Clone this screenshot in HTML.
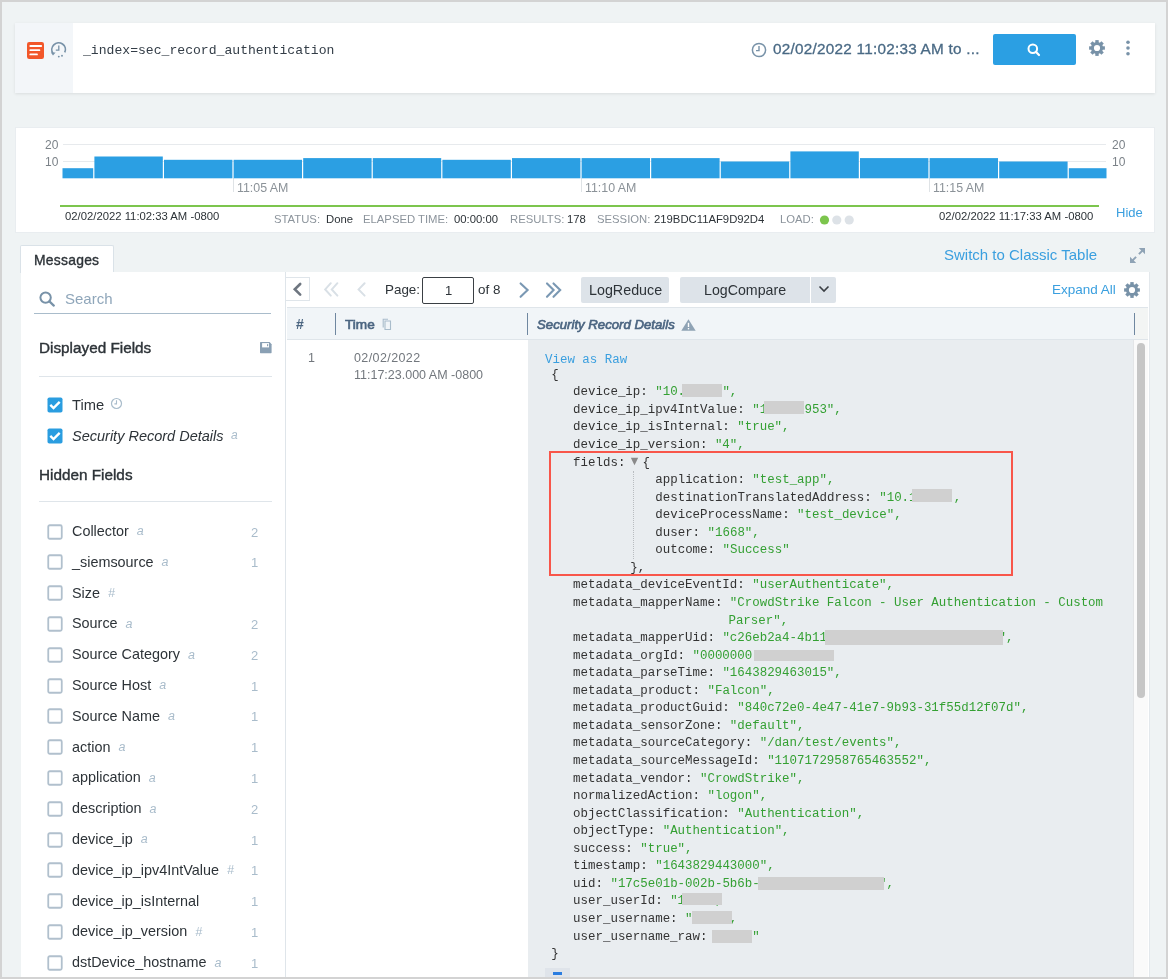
<!DOCTYPE html>
<html><head><meta charset="utf-8">
<style>
*{box-sizing:border-box;margin:0;padding:0}
html,body{width:1168px;height:979px;overflow:hidden;background:#d3d3d3;font-family:"Liberation Sans",sans-serif;color:#2d3338}
.a{position:absolute;white-space:pre}
#wrap{position:absolute;left:0;top:0;width:1168px;height:979px;will-change:transform}
#page{position:absolute;left:2px;top:2px;width:1164px;height:975px;background:#eff3f4;overflow:hidden}
.c{font-size:12.445px;line-height:17.59px;color:#333}
.mono{font-family:"Liberation Mono",monospace}
</style></head><body><div id="wrap">
<div class="a" style="left:0;top:0;width:1168px;height:979px;background:#d3d3d3"></div>
<div class="a" style="left:2px;top:2px;width:1164px;height:975px;background:#eff3f4"></div>

<!-- search bar -->
<div class="a" style="left:15px;top:23px;width:1140px;height:70px;background:#fff;box-shadow:0 1px 3px rgba(0,0,0,0.09)"></div>
<div class="a" style="left:15px;top:23px;width:58px;height:70px;background:#f3f6f9"></div>
<div class="a mono" style="left:83px;top:42px;font-size:13.1px;line-height:18px;color:#333d47">_index=sec_record_authentication</div>
<div class="a" style="left:773px;top:40px;font-size:15.3px;letter-spacing:0.25px;line-height:18px;color:#4a6a85;-webkit-text-stroke:0.3px #4a6a85">02/02/2022 11:02:33 AM to ...</div>
<div class="a" style="left:993px;top:34px;width:83px;height:31px;background:#2b9fe3;border-radius:2px"></div>

<!-- search icons -->
<svg class="a" style="left:27px;top:42px" width="17" height="17" viewBox="0 0 17 17"><rect x="0" y="0" width="17" height="17" rx="2.2" fill="#f2572a"/><g stroke="#fff" stroke-width="1.8" stroke-linecap="round"><line x1="3.3" y1="4" x2="14.2" y2="4"/><line x1="3.3" y1="8.2" x2="12.4" y2="8.2"/><line x1="3.3" y1="12.4" x2="10" y2="12.4"/></g></svg>
<svg class="a" style="left:50px;top:41px" width="18" height="18" viewBox="0 0 18 18"><path d="M3.03 12.50 A6.8 6.8 0 1 1 14.76 11.47" fill="none" stroke="#7892a8" stroke-width="1.7"/><path d="M0.9 11.6 L5.6 11.6 L3.0 14.6 Z" fill="#7892a8"/><path d="M8.8 4.4 V9.2 H5.8" fill="none" stroke="#7892a8" stroke-width="1.3"/><circle cx="8.8" cy="15.6" r="0.95" fill="#7892a8"/><circle cx="12.0" cy="14.8" r="0.95" fill="#7892a8"/></svg>
<svg class="a" style="left:751px;top:42px" width="16" height="16" viewBox="0 0 16 16"><circle cx="8" cy="8" r="6.6" fill="none" stroke="#7892a8" stroke-width="1.5"/><path d="M8 4 V8.6 H5" fill="none" stroke="#7892a8" stroke-width="1.4"/></svg>
<svg class="a" style="left:1026px;top:42px" width="16" height="16" viewBox="0 0 16 16"><circle cx="6.8" cy="6.8" r="4.3" fill="none" stroke="#fff" stroke-width="2"/><line x1="9.8" y1="9.8" x2="13" y2="13" stroke="#fff" stroke-width="2.2" stroke-linecap="round"/></svg>
<svg class="a" style="left:1089px;top:40px" width="16" height="16" viewBox="0 0 16 16"><g fill="#7892a8"><rect x="6.30" y="0.10" width="3.4" height="3.2" transform="rotate(0 8.00 8.00)"/><rect x="6.30" y="0.10" width="3.4" height="3.2" transform="rotate(45 8.00 8.00)"/><rect x="6.30" y="0.10" width="3.4" height="3.2" transform="rotate(90 8.00 8.00)"/><rect x="6.30" y="0.10" width="3.4" height="3.2" transform="rotate(135 8.00 8.00)"/><rect x="6.30" y="0.10" width="3.4" height="3.2" transform="rotate(180 8.00 8.00)"/><rect x="6.30" y="0.10" width="3.4" height="3.2" transform="rotate(225 8.00 8.00)"/><rect x="6.30" y="0.10" width="3.4" height="3.2" transform="rotate(270 8.00 8.00)"/><rect x="6.30" y="0.10" width="3.4" height="3.2" transform="rotate(315 8.00 8.00)"/><path fill-rule="evenodd" d="M8.00 8.00 m-6.1 0 a6.1 6.1 0 1 0 12.2 0 a6.1 6.1 0 1 0 -12.2 0 z M8.00 8.00 m-3.1 0 a3.1 3.1 0 1 1 6.2 0 a3.1 3.1 0 1 1 -6.2 0 z"/></g></svg>
<svg class="a" style="left:1125px;top:40px" width="6" height="17" viewBox="0 0 6 17"><circle cx="3" cy="2.2" r="1.8" fill="#7892a8"/><circle cx="3" cy="8" r="1.8" fill="#7892a8"/><circle cx="3" cy="13.8" r="1.8" fill="#7892a8"/></svg>

<!-- chart panel -->
<div class="a" style="left:15px;top:127px;width:1140px;height:106px;background:#fff;border:1px solid #e9edf0"></div>
<div class="a" style="left:60px;top:205px;width:1039px;height:2px;background:#7cc54d"></div>
<!-- chart -->
<svg class="a" style="left:0;top:0" width="1168" height="240">
<g stroke="#e7eaed" stroke-width="1"><line x1="63" y1="144.5" x2="1106" y2="144.5"/><line x1="63" y1="161.5" x2="1106" y2="161.5"/></g>
<g stroke="#dfe3e6" stroke-width="1"><line x1="233.5" y1="178" x2="233.5" y2="192"/><line x1="581.5" y1="178" x2="581.5" y2="192"/><line x1="929.5" y1="178" x2="929.5" y2="192"/></g>
<g fill="#2b9fe3">
<rect x="62.5" y="168.2" width="30.7" height="10.1"/>
<rect x="94.4" y="156.5" width="68.4" height="21.8"/>
<rect x="164.0" y="159.8" width="68.4" height="18.5"/>
<rect x="233.6" y="159.8" width="68.4" height="18.5"/>
<rect x="303.2" y="158.1" width="68.4" height="20.2"/>
<rect x="372.8" y="158.1" width="68.4" height="20.2"/>
<rect x="442.4" y="159.8" width="68.4" height="18.5"/>
<rect x="512.0" y="158.1" width="68.4" height="20.2"/>
<rect x="581.6" y="158.1" width="68.4" height="20.2"/>
<rect x="651.2" y="158.1" width="68.4" height="20.2"/>
<rect x="720.8" y="161.5" width="68.4" height="16.8"/>
<rect x="790.4" y="151.4" width="68.4" height="26.9"/>
<rect x="860.0" y="158.1" width="68.4" height="20.2"/>
<rect x="929.6" y="158.1" width="68.4" height="20.2"/>
<rect x="999.2" y="161.5" width="68.4" height="16.8"/>
<rect x="1068.8" y="168.2" width="37.7" height="10.1"/>
</g>
</svg>
<div class="a" style="left:45px;top:138px;font-size:12px;line-height:14px;color:#7b8288">20</div>
<div class="a" style="left:45px;top:155px;font-size:12px;line-height:14px;color:#7b8288">10</div>
<div class="a" style="left:1112px;top:138px;font-size:12px;line-height:14px;color:#7b8288">20</div>
<div class="a" style="left:1112px;top:155px;font-size:12px;line-height:14px;color:#7b8288">10</div>
<div class="a" style="left:237px;top:181px;font-size:12.4px;line-height:14px;color:#8b9298">11:05 AM</div>
<div class="a" style="left:585px;top:181px;font-size:12.4px;line-height:14px;color:#8b9298">11:10 AM</div>
<div class="a" style="left:933px;top:181px;font-size:12.4px;line-height:14px;color:#8b9298">11:15 AM</div>
<div class="a" style="left:65px;top:209.6px;font-size:11.3px;line-height:13px;color:#2d3338">02/02/2022 11:02:33 AM -0800</div>
<div class="a" style="left:939px;top:209.6px;font-size:11.3px;line-height:13px;color:#2d3338">02/02/2022 11:17:33 AM -0800</div>
<div class="a" style="left:1116px;top:205px;font-size:13px;line-height:15px;color:#3a9fdf">Hide</div>
<div class="a" style="left:274px;top:213px;font-size:11.3px;line-height:13px;color:#8c949c">STATUS:</div>
<div class="a" style="left:326px;top:213px;font-size:11.3px;line-height:13px;color:#2d3338">Done</div>
<div class="a" style="left:363px;top:213px;font-size:11.3px;line-height:13px;color:#8c949c">ELAPSED TIME:</div>
<div class="a" style="left:454px;top:213px;font-size:11.3px;line-height:13px;color:#2d3338">00:00:00</div>
<div class="a" style="left:510px;top:213px;font-size:11.3px;line-height:13px;color:#8c949c">RESULTS:</div>
<div class="a" style="left:567px;top:213px;font-size:11.3px;line-height:13px;color:#2d3338">178</div>
<div class="a" style="left:597px;top:213px;font-size:11.3px;line-height:13px;color:#8c949c">SESSION:</div>
<div class="a" style="left:654px;top:213px;font-size:11.3px;line-height:13px;color:#2d3338">219BDC11AF9D92D4</div>
<div class="a" style="left:780px;top:213px;font-size:11.3px;line-height:13px;color:#8c949c">LOAD:</div>
<svg class="a" style="left:818px;top:214px" width="40" height="12"><circle cx="6.5" cy="6" r="4.6" fill="#7cc54d"/><circle cx="18.8" cy="6" r="4.6" fill="#dde2e7"/><circle cx="31.2" cy="6" r="4.6" fill="#dde2e7"/></svg>


<!-- tab -->
<div class="a" style="left:20px;top:245px;width:94px;height:28px;background:#fff;border:1px solid #dae2e8;border-bottom:none;border-radius:2px 2px 0 0"></div>
<div class="a" style="left:34px;top:250.5px;font-size:13.9px;letter-spacing:0.25px;line-height:18px;color:#2d3338;-webkit-text-stroke:0.35px #2d3338">Messages</div>

<!-- left panel -->
<div class="a" style="left:21px;top:272px;width:265px;height:705px;background:#fff;border-right:1px solid #dfe5ea"></div>

<!-- left panel content -->
<svg class="a" style="left:39px;top:291px" width="17" height="16" viewBox="0 0 17 16"><circle cx="6.6" cy="6.6" r="5.2" fill="none" stroke="#7892a8" stroke-width="2"/><line x1="10.4" y1="10.4" x2="14.8" y2="14.6" stroke="#7892a8" stroke-width="2.2" stroke-linecap="round"/></svg>
<div class="a" style="left:65px;top:290px;font-size:15px;line-height:17px;color:#8fa6ba">Search</div>
<div class="a" style="left:34px;top:313px;width:237px;height:1px;background:#a9bccb"></div>
<div class="a" style="left:39px;top:338.5px;font-size:15.3px;line-height:18px;color:#2d3338;-webkit-text-stroke:0.4px #2d3338">Displayed Fields</div>
<svg class="a" style="left:260px;top:342px" width="12" height="12" viewBox="0 0 12 12"><path d="M0 0.6 Q0 0 0.6 0 H9.6 L11.6 2.2 V10.6 Q11.6 11.2 11 11.2 H0.6 Q0 11.2 0 10.6 Z" fill="#8aa0b4"/><rect x="2.1" y="1.1" width="6.9" height="4.3" fill="#fff"/><rect x="7.0" y="1.9" width="1.2" height="2.4" rx="0.5" fill="#8aa0b4"/></svg>
<div class="a" style="left:39px;top:376px;width:233px;height:1px;background:#dfe5ea"></div>
<svg class="a" style="left:47px;top:397.0px" width="16" height="16" viewBox="0 0 16 16"><rect x="0.5" y="0.5" width="15" height="15" rx="1.8" fill="#2a9de0"/><path d="M3.3 7.9 L6.5 11 L12.7 4.8" fill="none" stroke="#fff" stroke-width="2.4"/></svg>
<div class="a" style="left:72px;top:397px;font-size:14.7px;line-height:17px;color:#2d3338">Time</div>
<svg class="a" style="left:110px;top:397px" width="13" height="13" viewBox="0 0 13 13"><circle cx="6.5" cy="6.5" r="5" fill="none" stroke="#a9bccb" stroke-width="1.2"/><path d="M6.5 3.3 V6.9 H4.4" fill="none" stroke="#a9bccb" stroke-width="1.1"/></svg>
<svg class="a" style="left:47px;top:427.6px" width="16" height="16" viewBox="0 0 16 16"><rect x="0.5" y="0.5" width="15" height="15" rx="1.8" fill="#2a9de0"/><path d="M3.3 7.9 L6.5 11 L12.7 4.8" fill="none" stroke="#fff" stroke-width="2.4"/></svg>
<div class="a" style="left:72px;top:428px;font-size:14.5px;line-height:17px;color:#2d3338;font-style:italic">Security Record Details</div>
<div class="a" style="left:231px;top:428px;font-size:12px;line-height:15px;color:#a9bccb;font-style:italic">a</div>
<div class="a" style="left:39px;top:465.7px;font-size:15.3px;line-height:18px;color:#2d3338;-webkit-text-stroke:0.4px #2d3338">Hidden Fields</div>
<div class="a" style="left:39px;top:501px;width:233px;height:1px;background:#dfe5ea"></div>
<svg class="a" style="left:47px;top:523.5px" width="16" height="16" viewBox="0 0 16 16"><rect x="1.25" y="1.25" width="13.5" height="13.5" rx="1.5" fill="#fff" stroke="#b1c0cd" stroke-width="1.8"/></svg>
<div class="a" style="left:72px;top:523.0px;font-size:14.4px;line-height:17px;color:#2d3338">Collector<span style="font-size:12.5px;color:#a9bccb;font-style:italic;margin-left:8px;position:relative;top:-0.7px">a</span></div>
<div class="a" style="left:251px;top:524.5px;font-size:13px;line-height:15px;color:#a9bccb">2</div>
<svg class="a" style="left:47px;top:554.3px" width="16" height="16" viewBox="0 0 16 16"><rect x="1.25" y="1.25" width="13.5" height="13.5" rx="1.5" fill="#fff" stroke="#b1c0cd" stroke-width="1.8"/></svg>
<div class="a" style="left:72px;top:553.8px;font-size:14.4px;line-height:17px;color:#2d3338">_siemsource<span style="font-size:12.5px;color:#a9bccb;font-style:italic;margin-left:8px;position:relative;top:-0.7px">a</span></div>
<div class="a" style="left:251px;top:555.3px;font-size:13px;line-height:15px;color:#a9bccb">1</div>
<svg class="a" style="left:47px;top:585.1px" width="16" height="16" viewBox="0 0 16 16"><rect x="1.25" y="1.25" width="13.5" height="13.5" rx="1.5" fill="#fff" stroke="#b1c0cd" stroke-width="1.8"/></svg>
<div class="a" style="left:72px;top:584.6px;font-size:14.4px;line-height:17px;color:#2d3338">Size<span style="font-size:12.5px;color:#a9bccb;font-style:italic;margin-left:8px;position:relative;top:-0.7px">#</span></div>
<svg class="a" style="left:47px;top:615.9px" width="16" height="16" viewBox="0 0 16 16"><rect x="1.25" y="1.25" width="13.5" height="13.5" rx="1.5" fill="#fff" stroke="#b1c0cd" stroke-width="1.8"/></svg>
<div class="a" style="left:72px;top:615.4px;font-size:14.4px;line-height:17px;color:#2d3338">Source<span style="font-size:12.5px;color:#a9bccb;font-style:italic;margin-left:8px;position:relative;top:-0.7px">a</span></div>
<div class="a" style="left:251px;top:616.9px;font-size:13px;line-height:15px;color:#a9bccb">2</div>
<svg class="a" style="left:47px;top:646.7px" width="16" height="16" viewBox="0 0 16 16"><rect x="1.25" y="1.25" width="13.5" height="13.5" rx="1.5" fill="#fff" stroke="#b1c0cd" stroke-width="1.8"/></svg>
<div class="a" style="left:72px;top:646.2px;font-size:14.4px;line-height:17px;color:#2d3338">Source Category<span style="font-size:12.5px;color:#a9bccb;font-style:italic;margin-left:8px;position:relative;top:-0.7px">a</span></div>
<div class="a" style="left:251px;top:647.7px;font-size:13px;line-height:15px;color:#a9bccb">2</div>
<svg class="a" style="left:47px;top:677.5px" width="16" height="16" viewBox="0 0 16 16"><rect x="1.25" y="1.25" width="13.5" height="13.5" rx="1.5" fill="#fff" stroke="#b1c0cd" stroke-width="1.8"/></svg>
<div class="a" style="left:72px;top:677.0px;font-size:14.4px;line-height:17px;color:#2d3338">Source Host<span style="font-size:12.5px;color:#a9bccb;font-style:italic;margin-left:8px;position:relative;top:-0.7px">a</span></div>
<div class="a" style="left:251px;top:678.5px;font-size:13px;line-height:15px;color:#a9bccb">1</div>
<svg class="a" style="left:47px;top:708.3px" width="16" height="16" viewBox="0 0 16 16"><rect x="1.25" y="1.25" width="13.5" height="13.5" rx="1.5" fill="#fff" stroke="#b1c0cd" stroke-width="1.8"/></svg>
<div class="a" style="left:72px;top:707.8px;font-size:14.4px;line-height:17px;color:#2d3338">Source Name<span style="font-size:12.5px;color:#a9bccb;font-style:italic;margin-left:8px;position:relative;top:-0.7px">a</span></div>
<div class="a" style="left:251px;top:709.3px;font-size:13px;line-height:15px;color:#a9bccb">1</div>
<svg class="a" style="left:47px;top:739.1px" width="16" height="16" viewBox="0 0 16 16"><rect x="1.25" y="1.25" width="13.5" height="13.5" rx="1.5" fill="#fff" stroke="#b1c0cd" stroke-width="1.8"/></svg>
<div class="a" style="left:72px;top:738.6px;font-size:14.4px;line-height:17px;color:#2d3338">action<span style="font-size:12.5px;color:#a9bccb;font-style:italic;margin-left:8px;position:relative;top:-0.7px">a</span></div>
<div class="a" style="left:251px;top:740.1px;font-size:13px;line-height:15px;color:#a9bccb">1</div>
<svg class="a" style="left:47px;top:769.9px" width="16" height="16" viewBox="0 0 16 16"><rect x="1.25" y="1.25" width="13.5" height="13.5" rx="1.5" fill="#fff" stroke="#b1c0cd" stroke-width="1.8"/></svg>
<div class="a" style="left:72px;top:769.4px;font-size:14.4px;line-height:17px;color:#2d3338">application<span style="font-size:12.5px;color:#a9bccb;font-style:italic;margin-left:8px;position:relative;top:-0.7px">a</span></div>
<div class="a" style="left:251px;top:770.9px;font-size:13px;line-height:15px;color:#a9bccb">1</div>
<svg class="a" style="left:47px;top:800.7px" width="16" height="16" viewBox="0 0 16 16"><rect x="1.25" y="1.25" width="13.5" height="13.5" rx="1.5" fill="#fff" stroke="#b1c0cd" stroke-width="1.8"/></svg>
<div class="a" style="left:72px;top:800.2px;font-size:14.4px;line-height:17px;color:#2d3338">description<span style="font-size:12.5px;color:#a9bccb;font-style:italic;margin-left:8px;position:relative;top:-0.7px">a</span></div>
<div class="a" style="left:251px;top:801.7px;font-size:13px;line-height:15px;color:#a9bccb">2</div>
<svg class="a" style="left:47px;top:831.5px" width="16" height="16" viewBox="0 0 16 16"><rect x="1.25" y="1.25" width="13.5" height="13.5" rx="1.5" fill="#fff" stroke="#b1c0cd" stroke-width="1.8"/></svg>
<div class="a" style="left:72px;top:831.0px;font-size:14.4px;line-height:17px;color:#2d3338">device_ip<span style="font-size:12.5px;color:#a9bccb;font-style:italic;margin-left:8px;position:relative;top:-0.7px">a</span></div>
<div class="a" style="left:251px;top:832.5px;font-size:13px;line-height:15px;color:#a9bccb">1</div>
<svg class="a" style="left:47px;top:862.3px" width="16" height="16" viewBox="0 0 16 16"><rect x="1.25" y="1.25" width="13.5" height="13.5" rx="1.5" fill="#fff" stroke="#b1c0cd" stroke-width="1.8"/></svg>
<div class="a" style="left:72px;top:861.8px;font-size:14.4px;line-height:17px;color:#2d3338">device_ip_ipv4IntValue<span style="font-size:12.5px;color:#a9bccb;font-style:italic;margin-left:8px;position:relative;top:-0.7px">#</span></div>
<div class="a" style="left:251px;top:863.3px;font-size:13px;line-height:15px;color:#a9bccb">1</div>
<svg class="a" style="left:47px;top:893.1px" width="16" height="16" viewBox="0 0 16 16"><rect x="1.25" y="1.25" width="13.5" height="13.5" rx="1.5" fill="#fff" stroke="#b1c0cd" stroke-width="1.8"/></svg>
<div class="a" style="left:72px;top:892.6px;font-size:14.4px;line-height:17px;color:#2d3338">device_ip_isInternal<span style="font-size:12.5px;color:#a9bccb;font-style:italic;margin-left:8px;position:relative;top:-0.7px"></span></div>
<div class="a" style="left:251px;top:894.1px;font-size:13px;line-height:15px;color:#a9bccb">1</div>
<svg class="a" style="left:47px;top:923.9px" width="16" height="16" viewBox="0 0 16 16"><rect x="1.25" y="1.25" width="13.5" height="13.5" rx="1.5" fill="#fff" stroke="#b1c0cd" stroke-width="1.8"/></svg>
<div class="a" style="left:72px;top:923.4px;font-size:14.4px;line-height:17px;color:#2d3338">device_ip_version<span style="font-size:12.5px;color:#a9bccb;font-style:italic;margin-left:8px;position:relative;top:-0.7px">#</span></div>
<div class="a" style="left:251px;top:924.9px;font-size:13px;line-height:15px;color:#a9bccb">1</div>
<svg class="a" style="left:47px;top:954.7px" width="16" height="16" viewBox="0 0 16 16"><rect x="1.25" y="1.25" width="13.5" height="13.5" rx="1.5" fill="#fff" stroke="#b1c0cd" stroke-width="1.8"/></svg>
<div class="a" style="left:72px;top:954.2px;font-size:14.4px;line-height:17px;color:#2d3338">dstDevice_hostname<span style="font-size:12.5px;color:#a9bccb;font-style:italic;margin-left:8px;position:relative;top:-0.7px">a</span></div>
<div class="a" style="left:251px;top:955.7px;font-size:13px;line-height:15px;color:#a9bccb">1</div>

<!-- right panel -->
<div class="a" style="left:286px;top:272px;width:864px;height:705px;background:#fff;border-right:1px solid #e3e8ec"></div>
<div class="a" style="left:944px;top:246px;font-size:15px;line-height:18px;color:#3a9fdf">Switch to Classic Table</div>

<!-- right panel content -->
<svg class="a" style="left:1129px;top:247px" width="17" height="17" viewBox="0 0 17 17"><g fill="#8fa3b5"><path d="M16 1 L16 7.2 L13.6 4.8 L10.6 7.8 L9.2 6.4 L12.2 3.4 L9.8 1 Z"/><path d="M1 16 L1 9.8 L3.4 12.2 L6.4 9.2 L7.8 10.6 L4.8 13.6 L7.2 16 Z"/></g></svg>
<div class="a" style="left:286px;top:277px;width:24px;height:24px;border:1px solid #dfe5ea;border-left:none;background:#fff"></div>
<svg class="a" style="left:292px;top:282px" width="12" height="16" viewBox="0 0 12 16"><path d="M8.2 2 L2.8 7.3 L8.2 12.6" fill="none" stroke="#6e7680" stroke-width="2.6" stroke-linecap="round"/></svg>
<svg class="a" style="left:322px;top:281px" width="20" height="18" viewBox="0 0 20 18"><path d="M8.8 2.2 L3.2 8.4 L8.8 14.6 M15.4 2.2 L9.8 8.4 L15.4 14.6" fill="none" stroke="#d9e0e6" stroke-width="2" stroke-linecap="round"/></svg>
<svg class="a" style="left:355px;top:281px" width="14" height="18" viewBox="0 0 14 18"><path d="M9.6 2.2 L3.6 8.4 L9.6 14.6" fill="none" stroke="#d9e0e6" stroke-width="2" stroke-linecap="round"/></svg>
<div class="a" style="left:385px;top:281px;font-size:13.4px;line-height:17px;color:#2d3338">Page:</div>
<div class="a" style="left:422px;top:277px;width:52px;height:27px;border:1px solid #3a3f44;border-radius:2px;background:#fff"></div>
<div class="a" style="left:445px;top:283px;font-size:13px;line-height:16px;color:#2d3338">1</div>
<div class="a" style="left:478px;top:280.5px;font-size:13.4px;line-height:17px;color:#2d3338">of 8</div>
<svg class="a" style="left:516px;top:281px" width="14" height="18" viewBox="0 0 14 18"><path d="M4.6 2.4 L11.6 9 L4.6 15.8" fill="none" stroke="#7a98b3" stroke-width="2.1" stroke-linecap="round"/></svg>
<svg class="a" style="left:544px;top:281px" width="20" height="18" viewBox="0 0 20 18"><path d="M3 2.4 L9.6 9 L3 15.8 M9.5 2.4 L16.2 9 L9.5 15.8" fill="none" stroke="#7a98b3" stroke-width="2.1" stroke-linecap="round"/></svg>
<div class="a" style="left:581px;top:277px;width:88px;height:26px;background:#dde3e9;border-radius:2px"></div>
<div class="a" style="left:589px;top:282px;font-size:14.3px;line-height:17px;color:#2d3338">LogReduce</div>
<div class="a" style="left:680px;top:277px;width:130px;height:26px;background:#dde3e9;border-radius:2px 0 0 2px"></div>
<div class="a" style="left:811px;top:277px;width:25px;height:26px;background:#dde3e9;border-radius:0 2px 2px 0"></div>
<div class="a" style="left:704px;top:281.5px;font-size:14.2px;line-height:17px;color:#2d3338">LogCompare</div>
<svg class="a" style="left:818px;top:285px" width="12" height="8" viewBox="0 0 12 8"><path d="M1.5 1.5 L6 6 L10.5 1.5" fill="none" stroke="#3a3f44" stroke-width="1.6"/></svg>
<div class="a" style="left:1052px;top:280.5px;font-size:13.5px;line-height:17px;color:#3a9fdf">Expand All</div>
<svg class="a" style="left:1124px;top:282px" width="16" height="16" viewBox="0 0 16 16"><g fill="#7892a8"><rect x="6.30" y="0.10" width="3.4" height="3.2" transform="rotate(0 8.00 8.00)"/><rect x="6.30" y="0.10" width="3.4" height="3.2" transform="rotate(45 8.00 8.00)"/><rect x="6.30" y="0.10" width="3.4" height="3.2" transform="rotate(90 8.00 8.00)"/><rect x="6.30" y="0.10" width="3.4" height="3.2" transform="rotate(135 8.00 8.00)"/><rect x="6.30" y="0.10" width="3.4" height="3.2" transform="rotate(180 8.00 8.00)"/><rect x="6.30" y="0.10" width="3.4" height="3.2" transform="rotate(225 8.00 8.00)"/><rect x="6.30" y="0.10" width="3.4" height="3.2" transform="rotate(270 8.00 8.00)"/><rect x="6.30" y="0.10" width="3.4" height="3.2" transform="rotate(315 8.00 8.00)"/><path fill-rule="evenodd" d="M8.00 8.00 m-6.1 0 a6.1 6.1 0 1 0 12.2 0 a6.1 6.1 0 1 0 -12.2 0 z M8.00 8.00 m-3.1 0 a3.1 3.1 0 1 1 6.2 0 a3.1 3.1 0 1 1 -6.2 0 z"/></g></svg>
<div class="a" style="left:287px;top:307px;width:861px;height:33px;background:#f1f5f8;border-top:1px solid #dfe5ea;border-bottom:1px solid #dfe5ea"></div>
<div class="a" style="left:1134px;top:308px;width:14px;height:31px;background:#f3f5f4"></div>
<div class="a" style="left:296px;top:316px;font-size:14px;line-height:17px;color:#4b6581;font-weight:bold">#</div>
<div class="a" style="left:335px;top:313px;width:1px;height:22px;background:#6f87a0"></div>
<div class="a" style="left:345px;top:315.6px;font-size:13.6px;line-height:17px;color:#4b6581;-webkit-text-stroke:0.65px #4b6581">Time</div>
<svg class="a" style="left:382px;top:318px" width="11" height="13" viewBox="0 0 11 13"><path d="M3 3 H8.5 V11.5 H3 Z M1.2 9.5 V1.2 H6" fill="none" stroke="#a9bccb" stroke-width="1.1"/></svg>
<div class="a" style="left:527px;top:313px;width:1px;height:22px;background:#6f87a0"></div>
<div class="a" style="left:537px;top:316.4px;font-size:13.2px;line-height:17px;color:#4b6581;font-style:italic;-webkit-text-stroke:0.65px #4b6581">Security Record Details</div>
<svg class="a" style="left:681px;top:319px" width="15" height="12" viewBox="0 0 15 12"><path d="M7.5 0.3 L14.7 11.7 H0.3 Z" fill="#8fa3b5"/><rect x="6.8" y="3.8" width="1.4" height="4.2" fill="#fff"/><rect x="6.8" y="9" width="1.4" height="1.4" fill="#fff"/></svg>
<div class="a" style="left:1134px;top:313px;width:1px;height:22px;background:#6f87a0"></div>
<div class="a" style="left:308px;top:351px;font-size:12.5px;line-height:15px;color:#72777d">1</div>
<div class="a" style="left:354px;top:350px;font-size:12.5px;line-height:17px;color:#72777d"><span style="letter-spacing:0.4px">02/02/2022</span>
11:17:23.000 AM -0800</div>
<div class="a" style="left:528px;top:340px;width:606px;height:637px;background:#e9edf0"></div>
<div class="a" style="left:1133px;top:340px;width:1px;height:637px;background:#e3e5e7"></div>
<div class="a" style="left:1134px;top:340px;width:14px;height:637px;background:#fafafa"></div>
<div class="a" style="left:1137px;top:343px;width:8px;height:355px;background:#c6c6c6;border-radius:4px"></div>
<!-- code -->
<div class="a mono c" style="left:573.10px;top:384.31px"><span style="color:#333">device_ip: </span><span style="color:#34a033">"10.     "</span><span style="color:#34a033">,</span></div>
<div class="a mono c" style="left:573.10px;top:401.87px"><span style="color:#333">device_ip_ipv4IntValue: </span><span style="color:#34a033">"1     953"</span><span style="color:#34a033">,</span></div>
<div class="a mono c" style="left:573.10px;top:419.42px"><span style="color:#333">device_ip_isInternal: </span><span style="color:#34a033">"true"</span><span style="color:#34a033">,</span></div>
<div class="a mono c" style="left:573.10px;top:436.98px"><span style="color:#333">device_ip_version: </span><span style="color:#34a033">"4"</span><span style="color:#34a033">,</span></div>
<div class="a mono c" style="left:573.10px;top:454.53px"><span style="color:#333">fields:</span></div>
<div class="a mono c" style="left:655.30px;top:472.09px"><span style="color:#333">application: </span><span style="color:#34a033">"test_app"</span><span style="color:#34a033">,</span></div>
<div class="a mono c" style="left:655.30px;top:489.65px"><span style="color:#333">destinationTranslatedAddress: </span><span style="color:#34a033">"10.1     </span><span style="color:#34a033">,</span></div>
<div class="a mono c" style="left:655.30px;top:507.20px"><span style="color:#333">deviceProcessName: </span><span style="color:#34a033">"test_device"</span><span style="color:#34a033">,</span></div>
<div class="a mono c" style="left:655.30px;top:524.76px"><span style="color:#333">duser: </span><span style="color:#34a033">"1668"</span><span style="color:#34a033">,</span></div>
<div class="a mono c" style="left:655.30px;top:542.31px"><span style="color:#333">outcome: </span><span style="color:#34a033">"Success"</span><span style="color:#34a033"></span></div>
<div class="a mono c" style="left:630.20px;top:559.87px"><span style="color:#333">},</span></div>
<div class="a mono c" style="left:573.10px;top:577.43px"><span style="color:#333">metadata_deviceEventId: </span><span style="color:#34a033">"userAuthenticate"</span><span style="color:#34a033">,</span></div>
<div class="a mono c" style="left:573.10px;top:594.98px"><span style="color:#333">metadata_mapperName: </span><span style="color:#34a033">"CrowdStrike Falcon - User Authentication - Custom</span></div>
<div class="a mono c" style="left:728.43px;top:612.54px"><span style="color:#34a033">Parser",</span></div>
<div class="a mono c" style="left:573.10px;top:630.09px"><span style="color:#333">metadata_mapperUid: </span><span style="color:#34a033">"c26eb2a4-4b11                       "</span><span style="color:#34a033">,</span></div>
<div class="a mono c" style="left:573.10px;top:647.65px"><span style="color:#333">metadata_orgId: </span><span style="color:#34a033">"0000000           </span><span style="color:#34a033"></span></div>
<div class="a mono c" style="left:573.10px;top:665.21px"><span style="color:#333">metadata_parseTime: </span><span style="color:#34a033">"1643829463015"</span><span style="color:#34a033">,</span></div>
<div class="a mono c" style="left:573.10px;top:682.76px"><span style="color:#333">metadata_product: </span><span style="color:#34a033">"Falcon"</span><span style="color:#34a033">,</span></div>
<div class="a mono c" style="left:573.10px;top:700.32px"><span style="color:#333">metadata_productGuid: </span><span style="color:#34a033">"840c72e0-4e47-41e7-9b93-31f55d12f07d"</span><span style="color:#34a033">,</span></div>
<div class="a mono c" style="left:573.10px;top:717.87px"><span style="color:#333">metadata_sensorZone: </span><span style="color:#34a033">"default"</span><span style="color:#34a033">,</span></div>
<div class="a mono c" style="left:573.10px;top:735.43px"><span style="color:#333">metadata_sourceCategory: </span><span style="color:#34a033">"/dan/test/events"</span><span style="color:#34a033">,</span></div>
<div class="a mono c" style="left:573.10px;top:752.99px"><span style="color:#333">metadata_sourceMessageId: </span><span style="color:#34a033">"1107172958765463552"</span><span style="color:#34a033">,</span></div>
<div class="a mono c" style="left:573.10px;top:770.54px"><span style="color:#333">metadata_vendor: </span><span style="color:#34a033">"CrowdStrike"</span><span style="color:#34a033">,</span></div>
<div class="a mono c" style="left:573.10px;top:788.10px"><span style="color:#333">normalizedAction: </span><span style="color:#34a033">"logon"</span><span style="color:#34a033">,</span></div>
<div class="a mono c" style="left:573.10px;top:805.65px"><span style="color:#333">objectClassification: </span><span style="color:#34a033">"Authentication"</span><span style="color:#34a033">,</span></div>
<div class="a mono c" style="left:573.10px;top:823.21px"><span style="color:#333">objectType: </span><span style="color:#34a033">"Authentication"</span><span style="color:#34a033">,</span></div>
<div class="a mono c" style="left:573.10px;top:840.77px"><span style="color:#333">success: </span><span style="color:#34a033">"true"</span><span style="color:#34a033">,</span></div>
<div class="a mono c" style="left:573.10px;top:858.32px"><span style="color:#333">timestamp: </span><span style="color:#34a033">"1643829443000"</span><span style="color:#34a033">,</span></div>
<div class="a mono c" style="left:573.10px;top:875.88px"><span style="color:#333">uid: </span><span style="color:#34a033">"17c5e01b-002b-5b6b-                "</span><span style="color:#34a033">,</span></div>
<div class="a mono c" style="left:573.10px;top:893.43px"><span style="color:#333">user_userId: </span><span style="color:#34a033">"1    ,</span></div>
<div class="a mono c" style="left:573.10px;top:910.99px"><span style="color:#333">user_username: </span><span style="color:#34a033">"     ,</span></div>
<div class="a mono c" style="left:573.10px;top:928.55px"><span style="color:#333">user_username_raw: </span><span style="color:#34a033">     "</span></div>
<div class="a mono c" style="left:551.20px;top:946.10px"><span style="color:#333">}</span></div>
<div class="a mono c" style="left:551.20px;top:366.75px"><span style="color:#333">{</span></div>
<div class="a mono" style="left:545px;top:351.91px;font-size:12.445px;line-height:17.56px;color:#3a9fdf">View as Raw</div>
<svg class="a" style="left:630px;top:457px" width="9" height="9" viewBox="0 0 9 9"><path d="M0.8 0.8 H8.2 L4.5 8.2 Z" fill="#8a8a8a"/></svg>
<div class="a mono c" style="left:642.6px;top:454.53px"><span style="color:#333">{</span></div>
<div class="a" style="left:633px;top:471px;width:0;height:88px;border-left:1px dotted #b8bcc0"></div>
<div class="a" style="left:681.8px;top:383.9px;width:40.1px;height:12.8px;background:#d0d0d0"></div>
<div class="a" style="left:764.0px;top:401.0px;width:39.8px;height:12.6px;background:#d0d0d0"></div>
<div class="a" style="left:912.0px;top:489.3px;width:40.0px;height:13.2px;background:#d0d0d0"></div>
<div class="a" style="left:825.1px;top:630.0px;width:177.9px;height:14.7px;background:#d0d0d0"></div>
<div class="a" style="left:754.0px;top:650.0px;width:79.8px;height:10.8px;background:#d0d0d0"></div>
<div class="a" style="left:758.0px;top:877.4px;width:126.0px;height:13.1px;background:#d0d0d0"></div>
<div class="a" style="left:681.6px;top:892.5px;width:40.4px;height:12.3px;background:#d0d0d0"></div>
<div class="a" style="left:692.3px;top:911.0px;width:39.7px;height:12.7px;background:#d0d0d0"></div>
<div class="a" style="left:712.3px;top:929.5px;width:39.7px;height:13.1px;background:#d0d0d0"></div>
<div class="a" style="left:549px;top:451px;width:464px;height:125px;border:2px solid #f8564a"></div>
<div class="a" style="left:545px;top:968px;width:25px;height:9px;background:#dfe4ea"></div>
<div class="a" style="left:553px;top:972px;width:9px;height:2.5px;background:#2a7de0"></div>
<!-- /code -->
</div></body></html>
